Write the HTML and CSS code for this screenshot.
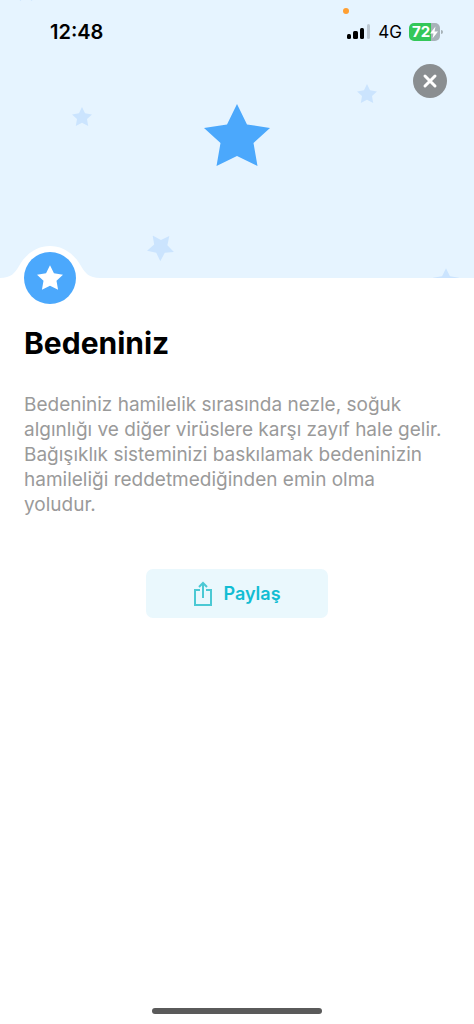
FILE: index.html
```html
<!DOCTYPE html>
<html lang="tr">
<head>
<meta charset="utf-8">
<meta name="viewport" content="width=device-width, initial-scale=1">
<title>Bedeniniz</title>
<link rel="stylesheet" href="styles.css">
</head>
<body>
<svg width="0" height="0" class="defs" aria-hidden="true">
  <symbol id="star" viewBox="0 0 66 62">
    <path d="M33 0 43 20.500 66 24 49.500 39 53.500 62 33 52 12.500 62 16.500 39 0 24 23 20.500Z"/>
  </symbol>
</svg>
<div class="page">
  <header class="hero">
    <svg class="deco deco-left" aria-hidden="true"><use href="#star"/></svg>
    <svg class="deco deco-right" aria-hidden="true"><use href="#star"/></svg>
    <svg class="deco deco-low" aria-hidden="true"><use href="#star"/></svg>
    <svg class="deco deco-edge" aria-hidden="true"><use href="#star"/></svg>
    <svg class="deco deco-top" aria-hidden="true"><use href="#star"/></svg>
    <span class="recording"></span>
    <div class="status">
      <time class="clock">12:48</time>
      <div class="indicators">
        <svg width="24" height="16" viewBox="0 0 24 16" aria-hidden="true">
          <rect x="0" y="10" width="4" height="5" rx="1.500"/>
          <rect x="6" y="7" width="5" height="8" rx="1.500"/>
          <rect x="13" y="4" width="4" height="11" rx="1.500"/>
          <rect x="20" y="0" width="3" height="15" rx="1.500" fill="#bcc7d1"/>
        </svg>
        <span class="network">4G</span>
        <span class="battery">
          <span class="level">72</span>
          <svg class="bolt" width="8" height="13" viewBox="0 0 8 12" aria-hidden="true"><path d="M5.500 0 0 7H3.500L2.500 12 8 5H4.500Z" fill="#fff"/></svg>
        </span>
      </div>
    </div>
    <div class="toolbar">
      <button class="close" type="button" aria-label="Kapat">
        <svg width="16" height="16" viewBox="0 0 16 16" aria-hidden="true"><path d="M3 3 13 13M13 3 3 13" stroke="#fff" stroke-width="3" stroke-linecap="round"/></svg>
      </button>
    </div>
    <svg class="main-star" aria-hidden="true"><use href="#star"/></svg>
  </header>
  <main class="content">
    <div class="badge">
      <svg width="100" height="62" viewBox="0 0 100 62" aria-hidden="true">
        <path d="M0 32C11 32 15 27 19 20C25 9 36 0 50 0C64 0 75 9 81 20C85 27 89 32 100 32V62H0Z" fill="#fff"/>
        <circle cx="50" cy="32" r="26" fill="#4ba8fc"/>
        <use href="#star" x="37" y="19" width="26" height="25" fill="#fff"/>
      </svg>
    </div>
    <h1>Bedeniniz</h1>
    <p>Bedeniniz hamilelik sırasında nezle, soğuk algınlığı ve diğer virüslere karşı zayıf hale gelir. Bağışıklık sisteminizi baskılamak bedeninizin hamileliği reddetmediğinden emin olma yoludur.</p>
    <button class="share" type="button">
      <svg width="20" height="26" viewBox="0 0 20 26" fill="none" stroke="#4bc9d4" stroke-width="2" aria-hidden="true">
        <path d="M7 9H2V24H18V9H13M10 17V2M6 6 10 2 14 6"/>
      </svg>
      <span>Paylaş</span>
    </button>
  </main>
  <div class="home-bar"></div>
</div>
</body>
</html>
```
FILE: styles.css
```css
* { box-sizing: border-box; }
body {
  margin: 0;
  background: #fff;
  color: #000;
  font-family: Inter, "Liberation Sans", sans-serif;
}
button { border: 0; padding: 0; font: inherit; cursor: pointer; }
svg { display: block; }
.defs { position: absolute; }
.page { min-height: 100vh; display: flex; flex-direction: column; }
.hero {
  position: relative;
  height: 278px;
  display: flex;
  flex-direction: column;
  overflow: hidden;
  background: #e6f4ff;
}
.status {
  display: flex;
  justify-content: space-between;
  align-items: center;
  height: 64px;
  padding: 0 34px 0 50px;
}
.clock { font-size: 20px; font-weight: 600; }
.indicators { display: flex; align-items: center; gap: 7px; }
.network { font-size: 17px; }
.battery {
  position: relative;
  display: flex;
  align-items: center;
  width: 31px;
  height: 18px;
  padding-left: 3px;
  border-radius: 5px;
  background: linear-gradient(90deg, #34c759 72%, #a7b2b8 72%);
  color: #fff;
}
.battery::after {
  content: "";
  position: absolute;
  left: 32px;
  top: 7px;
  width: 2px;
  height: 4px;
  border-radius: 0 2px 2px 0;
  background: #a7b2b8;
}
.level { font-size: 15px; line-height: 18px; font-weight: 700; }
.bolt { flex: none; }
.recording {
  position: absolute;
  left: 343px;
  top: 8px;
  width: 6px;
  height: 6px;
  border-radius: 50%;
  background: #ff9f32;
}
.toolbar { display: flex; justify-content: flex-end; padding: 0 27px; }
.close {
  display: grid;
  place-items: center;
  width: 34px;
  height: 34px;
  border-radius: 50%;
  background: #8a8e91;
}
.main-star {
  width: 66px;
  height: 62px;
  margin: 6px auto 0;
  fill: #4ba8fc;
}
.deco { position: absolute; width: 20px; height: 19px; fill: #cbe4fe; }
.deco-left { left: 72px; top: 107px; }
.deco-right { left: 357px; top: 84px; }
.deco-low { left: 148px; top: 233px; width: 27px; height: 26px; transform: rotate(38deg); }
.deco-edge { left: 433px; top: 268px; width: 26px; height: 25px; }
.deco-top { left: 16px; top: -18px; }
.content { flex: 1; padding: 0 24px; }
.badge { position: relative; margin: -32px 0 0 -24px; }
.content h1 { margin: 17px 0 0; font-size: 30px; line-height: 36px; font-weight: 700; }
.content p {
  margin: 31px 0 0;
  color: #9a9a9a;
  font-size: 19px;
  line-height: 25px;
}
.share {
  display: flex;
  justify-content: center;
  align-items: center;
  gap: 10px;
  width: 182px;
  height: 49px;
  margin: 52px auto 0;
  border-radius: 7px;
  background: #eaf8fd;
  color: #12bdd3;
  font-size: 18px;
  font-weight: 600;
}
.home-bar {
  width: 170px;
  height: 6px;
  margin: 0 auto 10px;
  border-radius: 3px;
  background: #5a5a5a;
}
```
